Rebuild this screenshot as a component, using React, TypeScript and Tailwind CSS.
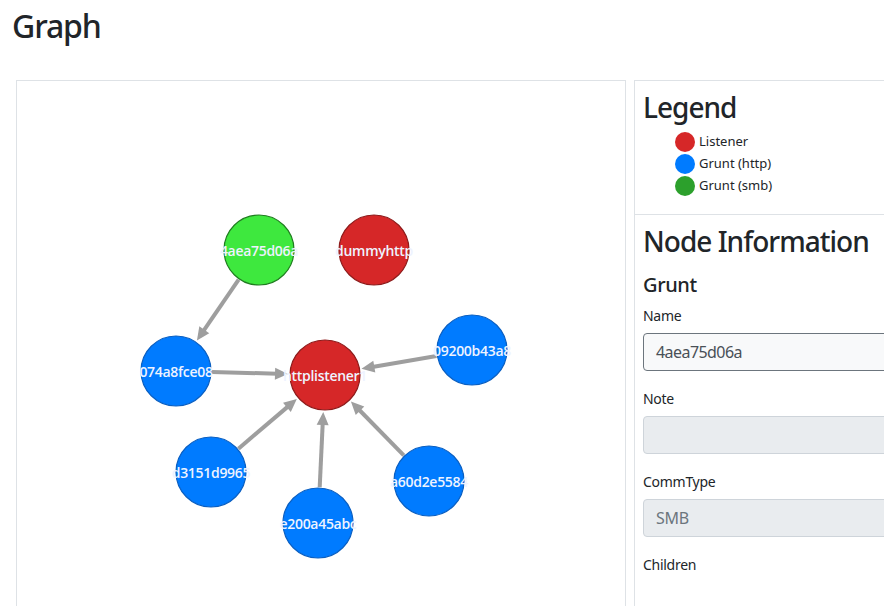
import React from "react";

type N = { id: string; x: number; y: number; fill: string; stroke: string };

const BLUE = "#007bff";
const BLUE_S = "#0a5fc2";
const RED = "#d62728";
const RED_S = "#8e1b1b";

const nodes: N[] = [
  { id: "4aea75d06a", x: 259, y: 250, fill: "#3ee83e", stroke: "#1f7d1f" },
  { id: "dummyhttp", x: 374, y: 250, fill: RED, stroke: RED_S },
  { id: "074a8fce08", x: 176, y: 371, fill: BLUE, stroke: BLUE_S },
  { id: "httplistener1", x: 325, y: 375, fill: RED, stroke: RED_S },
  { id: "09200b43a8", x: 472, y: 350, fill: BLUE, stroke: BLUE_S },
  { id: "d3151d9965", x: 211, y: 472, fill: BLUE, stroke: BLUE_S },
  { id: "e200a45abc", x: 318, y: 523, fill: BLUE, stroke: BLUE_S },
  { id: "a60d2e5584", x: 429, y: 481, fill: BLUE, stroke: BLUE_S },
];

const edges: [string, string][] = [
  ["4aea75d06a", "074a8fce08"],
  ["074a8fce08", "httplistener1"],
  ["09200b43a8", "httplistener1"],
  ["d3151d9965", "httplistener1"],
  ["e200a45abc", "httplistener1"],
  ["a60d2e5584", "httplistener1"],
];

const R = 35;

function Edge({ a, b }: { a: N; b: N }) {
  const dx = b.x - a.x;
  const dy = b.y - a.y;
  const d = Math.hypot(dx, dy);
  const ux = dx / d;
  const uy = dy / d;
  const sx = a.x + ux * (R + 1);
  const sy = a.y + uy * (R + 1);
  const tx = b.x - ux * (R + 2);
  const ty = b.y - uy * (R + 2);
  const L = 13;
  const W = 6;
  const bx = tx - ux * L;
  const by = ty - uy * L;
  const px = -uy;
  const py = ux;
  return (
    <g>
      <line x1={sx} y1={sy} x2={bx + ux * 2} y2={by + uy * 2} stroke="#9e9e9e" strokeWidth={4} />
      <polygon
        points={`${tx},${ty} ${bx + px * W},${by + py * W} ${bx},${by} ${bx - px * W},${by - py * W}`}
        fill="#9e9e9e"
      />
    </g>
  );
}

function Graph() {
  const m = new Map(nodes.map((n) => [n.id, n]));
  return (
    <svg width={608} height={540} className="block">
      <g transform="translate(-17,-81)">
        {edges.map(([s, t]) => (
          <Edge key={s + t} a={m.get(s)!} b={m.get(t)!} />
        ))}
        {nodes.map((n) => (
          <g key={n.id}>
            <circle cx={n.x} cy={n.y} r={R} fill={n.fill} stroke={n.stroke} strokeWidth={1.2} />
            <text
              x={n.x}
              y={n.y}
              textAnchor="middle"
              dominantBaseline="central"
              fill="#eef3ff"
              fontSize={14}
              fontWeight={600}
              fontFamily="'Open Sans', sans-serif"
              letterSpacing="-0.3"
            >
              {n.id}
            </text>
          </g>
        ))}
      </g>
    </svg>
  );
}

function Field({ label, value, active }: { label: string; value?: string; active?: boolean }) {
  return (
    <div className="flex flex-col">
      <div className="h-[21px] text-[14px] leading-[21px] tracking-[-0.02em] text-[#212529]">{label}</div>
      <div
        className={
          active
            ? "mt-[7px] h-[38px] rounded-[4px] border border-[#6c757d] bg-[#f8f9fa] pl-3 text-[16px] leading-[36px] tracking-[-0.035em] text-[#495057]"
            : "mt-[7px] h-[38px] rounded-[4px] border border-[#ced4da] bg-[#e9ecef] pl-3 text-[16px] leading-[36px] tracking-[-0.02em] text-[#6c757d]"
        }
      >
        {value}
      </div>
    </div>
  );
}

export default function App() {
  return (
    <div
      className="relative h-[606px] w-[884px] overflow-hidden bg-white text-[#212529]"
      style={{ fontFamily: "'Noto Sans', 'Open Sans', sans-serif" }}
    >
      <h1 className="ml-[12px] mt-[6px] h-[40px] text-[32px] font-medium leading-[40px] tracking-[-0.035em]">
        Graph
      </h1>
      <div className="mt-[34px] flex gap-2 pl-4">
        <div className="h-[560px] w-[610px] shrink-0 border border-[#dee2e6]">
          <Graph />
        </div>
        <div className="h-[560px] w-[300px] shrink-0 border border-[#dee2e6]">
          <div className="border-b border-[#dee2e6] pb-[17px] pl-2 pt-[9px]">
            <h2 className="h-[34px] text-[28px] font-medium leading-[34px] tracking-[-0.035em]">Legend</h2>
            <ul className="mt-[7px] pl-[32px]">
              {[
                ["Listener", RED],
                ["Grunt (http)", BLUE],
                ["Grunt (smb)", "#2ca02c"],
              ].map(([t, c]) => (
                <li key={t} className="flex h-[22px] items-center gap-[4px] text-[13px]">
                  <span className="inline-block h-[20px] w-[20px] rounded-full" style={{ backgroundColor: c }} />
                  <span>{t}</span>
                </li>
              ))}
            </ul>
          </div>
          <div className="pl-2 pt-[9px]">
            <h2 className="h-[34px] text-[28px] font-medium leading-[34px] tracking-[-0.035em]">
              Node Information
            </h2>
            <h5 className="mt-[15px] h-[24px] text-[20px] font-medium leading-[24px] tracking-[-0.02em]">Grunt</h5>
            <div className="mt-[8px] flex flex-col gap-[17px]">
              <Field label="Name" value="4aea75d06a" active />
              <Field label="Note" />
              <Field label="CommType" value="SMB" />
              <div className="h-[21px] text-[14px] leading-[21px] tracking-[-0.02em]">Children</div>
            </div>
          </div>
        </div>
      </div>
    </div>
  );
}
